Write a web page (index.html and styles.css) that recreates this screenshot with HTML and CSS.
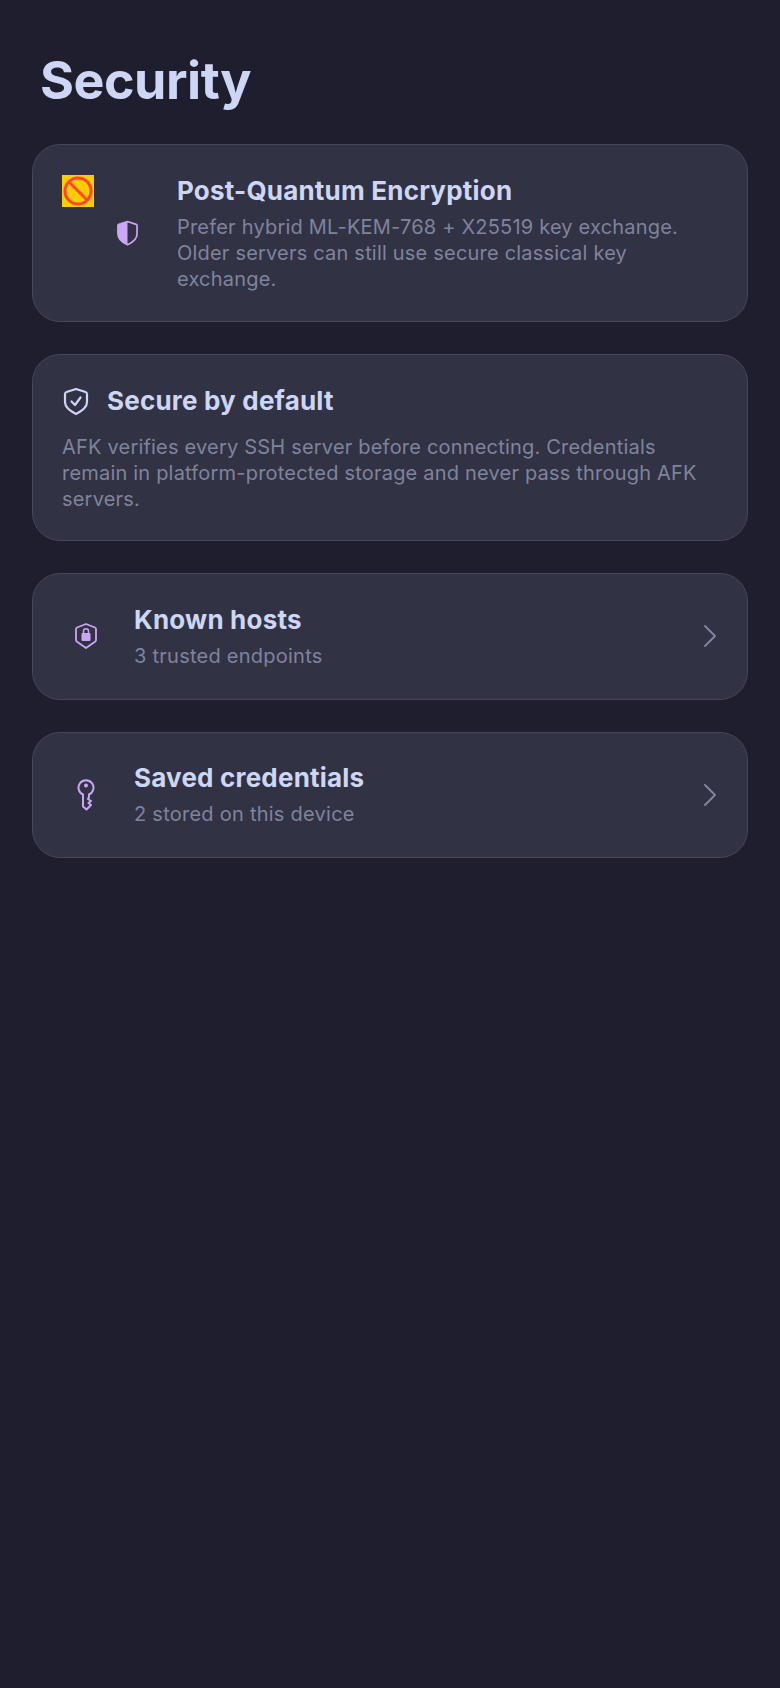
FILE: index.html
```html
<!DOCTYPE html>
<html lang="en">
<head>
    <meta charset="UTF-8">
    <meta name="viewport" content="width=device-width, initial-scale=1.0">
    <title>Security</title>
    <link rel="stylesheet" href="styles.css">
</head>
<body>
    <h1 class="page-title">Security</h1>

    <div class="card pq-card">
        <div class="pq-icon-box">
            <svg class="missing-icon" viewBox="0 0 32 32">
                <rect width="32" height="32" fill="#ffcc00"/>
                <circle cx="16" cy="16" r="13" fill="none" stroke="#ff4433" stroke-width="3"/>
                <line x1="7" y1="7" x2="25" y2="25" stroke="#ff4433" stroke-width="3"/>
            </svg>
            <svg class="half-shield" viewBox="0 0 22 26">
                <path d="M11 1 L20 4 Q21 4.400 21 5.500 V14 C21 19 16.500 22.800 11 25.300 C5.500 22.800 1 19 1 14 V5.500 Q1 4.400 2 4 Z" fill="none" stroke="#cba6f7" stroke-width="1.800" stroke-linejoin="round"/>
                <path d="M11 1 L2 4 Q1 4.400 1 5.500 V14 C1 19 5.500 22.800 11 25.300 Z" fill="#cba6f7"/>
            </svg>
        </div>
        <div class="pq-text">
            <div class="card-title">Post-Quantum Encryption</div>
            <div class="card-desc">Prefer hybrid ML-KEM-768 + X25519 key exchange. Older servers can still use secure classical key exchange.</div>
        </div>
    </div>

    <div class="card info-card">
        <div class="info-head">
            <svg class="head-icon" viewBox="0 0 28 28">
                <path d="M14 2 L23.500 5 Q25 5.500 25 7 V15 C25 20.500 20 24 14 27 C8 24 3 20.500 3 15 V7 Q3 5.500 4.500 5 Z" fill="none" stroke="#cdd6f4" stroke-width="2.200" stroke-linejoin="round"/>
                <path d="M9.500 14.500 L13 18 L18.500 10.500" fill="none" stroke="#cdd6f4" stroke-width="2.200" stroke-linecap="round" stroke-linejoin="round"/>
            </svg>
            <div class="card-title">Secure by default</div>
        </div>
        <div class="card-desc">AFK verifies every SSH server before connecting. Credentials remain in platform-protected storage and never pass through AFK servers.</div>
    </div>

    <div class="card row-card">
        <div class="row-icon">
            <svg class="lock-shield" viewBox="0 0 22 26">
                <path d="M11 1 L20 4.500 Q21 4.900 21 6 V17 Q21 18 20 18.800 L11 25 L2 18.800 Q1 18 1 17 V6 Q1 4.900 2 4.500 Z" fill="none" stroke="#cba6f7" stroke-width="1.800" stroke-linejoin="round"/>
                <rect x="6.500" y="10" width="9" height="8" rx="1" fill="#cba6f7"/>
                <path d="M8.500 10.500 V8 C8.500 5 13.500 5 13.500 8 V10.500" fill="none" stroke="#cba6f7" stroke-width="1.500"/>
            </svg>
        </div>
        <div class="row-text">
            <div class="card-title">Known hosts</div>
            <div class="row-sub">3 trusted endpoints</div>
        </div>
        <svg class="chevron" viewBox="0 0 14 24">
            <path d="M2 2 L12 12 L2 22" fill="none" stroke="#7f849c" stroke-width="2" stroke-linecap="round" stroke-linejoin="round"/>
        </svg>
    </div>

    <div class="card row-card">
        <div class="row-icon">
            <svg class="key-icon" viewBox="0 0 18 32">
                <path d="M6 15.500 A7.500 7.500 0 1 1 12 15.500 V18 L11 20 L14 22 L11.500 24 L14 26 L9.500 30.500 L6 27.500 Z" fill="none" stroke="#cba6f7" stroke-width="2" stroke-linejoin="round"/>
                <circle cx="9" cy="6.500" r="2" fill="#cba6f7"/>
            </svg>
        </div>
        <div class="row-text">
            <div class="card-title">Saved credentials</div>
            <div class="row-sub">2 stored on this device</div>
        </div>
        <svg class="chevron" viewBox="0 0 14 24">
            <path d="M2 2 L12 12 L2 22" fill="none" stroke="#7f849c" stroke-width="2" stroke-linecap="round" stroke-linejoin="round"/>
        </svg>
    </div>
</body>
</html>
```

FILE: styles.css
```css
body {
    margin: 0;
    height: 1688px;
    padding: 47px 32px 0;
    box-sizing: border-box;
    background-color: #1e1e2e;
    font-family: Inter, "Noto Sans", sans-serif;
    color: #cdd6f4;
    overflow: hidden;
}

.page-title {
    margin: 0 0 29px 8px;
    font-size: 52px;
    line-height: 68px;
    font-weight: 700;
    letter-spacing: -0.5px;
}

.card {
    box-sizing: border-box;
    background-color: #313244;
    border: 1px solid #45475a;
    border-radius: 28px;
    margin-bottom: 32px;
}

.card-title {
    font-size: 26px;
    line-height: 34px;
    font-weight: 700;
    letter-spacing: 0.2px;
}

.card-desc {
    font-size: 20px;
    line-height: 26px;
    letter-spacing: 0.2px;
    color: #7f849c;
}

.pq-card {
    display: flex;
    height: 178px;
    padding: 29px 44px 0 29px;
}

.pq-icon-box {
    width: 115px;
    flex: none;
    position: relative;
}

.missing-icon {
    display: block;
    width: 32px;
    height: 32px;
    margin-top: 1px;
}

.half-shield {
    position: absolute;
    left: 55px;
    top: 46px;
    width: 21px;
    height: 26px;
}

.pq-text .card-desc {
    margin-top: 6px;
}

.info-card {
    height: 187px;
    padding: 29px 44px 0 29px;
}

.info-head {
    display: flex;
    align-items: center;
    gap: 17px;
    margin-bottom: 16px;
}

.head-icon {
    width: 28px;
    height: 28px;
    flex: none;
}

.row-card {
    display: flex;
    align-items: center;
    height: 126.5px;
    padding: 0 30px 0 0;
}

.row-icon {
    width: 101px;
    padding-left: 5px;
    box-sizing: border-box;
    flex: none;
    display: flex;
    justify-content: center;
}

.lock-shield {
    width: 22px;
    height: 26px;
}

.key-icon {
    width: 18px;
    height: 32px;
}

.row-text {
    flex: 1;
}

.row-sub {
    font-size: 20px;
    line-height: 27px;
    letter-spacing: 0.25px;
    margin-top: 6px;
    color: #7f849c;
}

.chevron {
    width: 14px;
    height: 24px;
    flex: none;
}
```
